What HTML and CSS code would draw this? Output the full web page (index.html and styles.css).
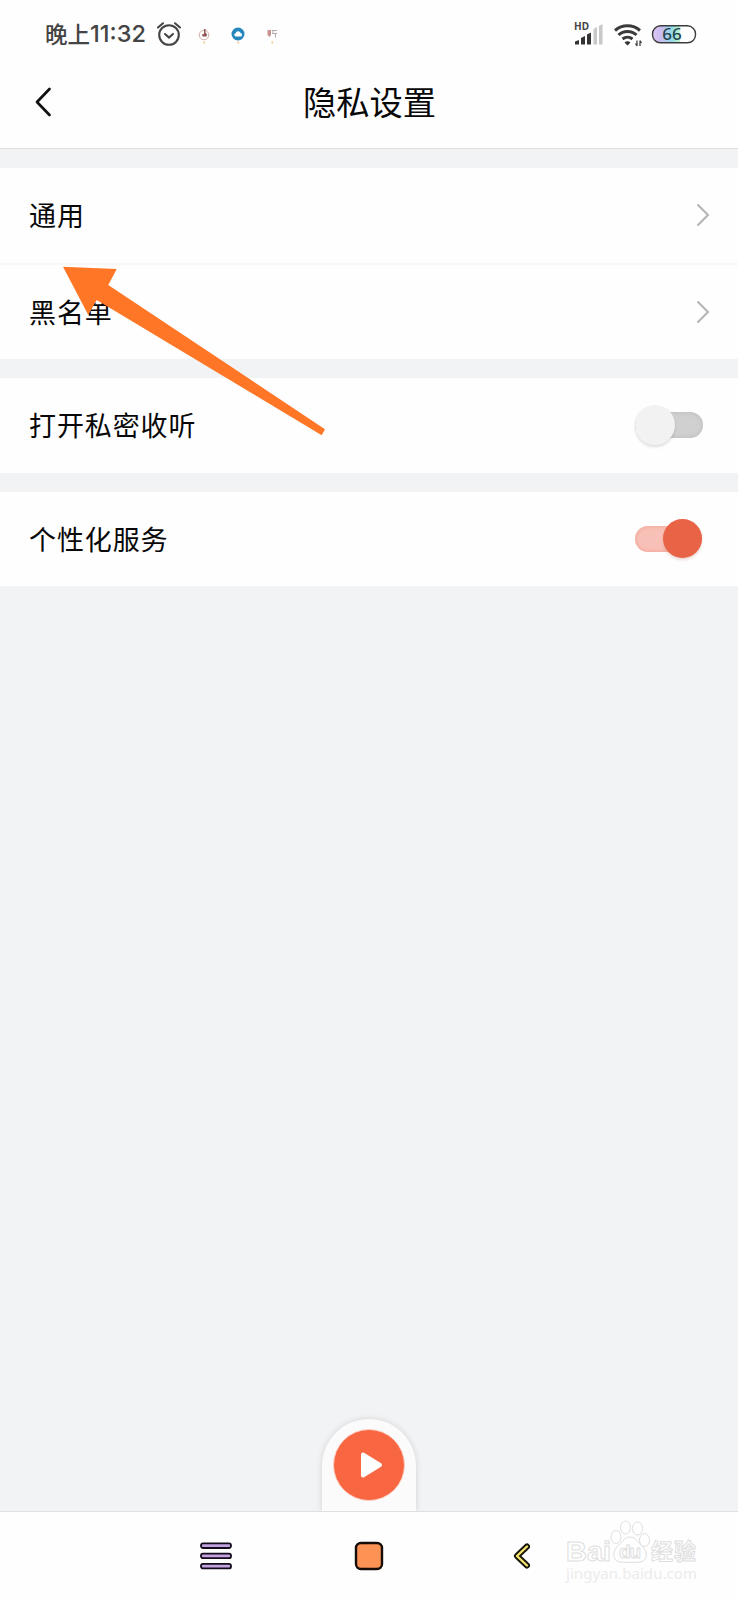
FILE: index.html
```html
<!DOCTYPE html>
<html lang="zh-CN">
<head>
<meta charset="utf-8">
<title>隐私设置</title>
<link rel="stylesheet" href="styles.css">
</head>
<body>
<div class="screen">
  <div class="status">
    <span class="clock">晚上<span class="digits">11:32</span></span>
    <svg class="alarm" width="26" height="26" viewBox="0 0 26 26"><circle cx="13" cy="14" r="9.8"/><path d="M9 13l4 3.600 4-3.600M2 6.500l5-4.200M24 6.500l-5-4.200"/></svg>
    <svg class="mini-icons" width="84" height="22" viewBox="0 0 84 22">
      <circle cx="9" cy="11" r="4.800" fill="none" stroke="#c9a5a0" stroke-width=".9"/>
      <path d="M9 5h1.500v4l1.500 1-.5 2.500H7.500L7 10.500l2-.5z" fill="#8d5350"/>
      <circle cx="43" cy="10" r="6.500" fill="#2587bd"/>
      <path d="M40.500 12.500a1.700 1.700 0 0 1 .1-3.300 2.700 2.700 0 0 1 5-.3 1.900 1.900 0 0 1 .2 3.600z" fill="#fff"/>
      <path d="M72.500 6H76v5l-1.500 2-2-2z" fill="#c99090"/>
      <path d="M77 6.500h5M78 6.500v3M77 9.500h5M80.500 9.500v4" fill="none" stroke="#b5aaaa" stroke-width="1"/>
      <path d="M8.500 17.500H10v2H8.500zM42.500 17.500H44v2h-1.500zM76.500 17.500H78v2h-1.500z" fill="#f5c481"/>
    </svg>
    <svg class="system" width="124" height="32" viewBox="0 -4 124 32">
      <text x="0" y="9" class="hd">HD</text>
      <path class="solid" d="M1 23.500v-3l4-1.500v4.500zM7 23.500V17l4-2v8.500zM13 23.500v-10l4-2v12z"/>
      <path d="M19.500 23.500V8l3.500-2v17.500zM25 23.500V5l3.500-2v20.500z" fill="#c8c8c8"/>
      <g class="waves"><path d="M41 9.500a19 19 0 0 1 25 0M44.500 14a13 13 0 0 1 18 0M48.500 18a8 8 0 0 1 10 0"/></g>
      <path class="solid" d="M50.500 21.500a4.500 4.500 0 0 1 6 0l-3 3z"/>
      <path d="M63 19.500v5.500M66 19.500V25M61.500 22.500L63 25M67.500 22L66 19.500" stroke="#444" stroke-width="1.300" fill="none"/>
      <defs><linearGradient id="charge"><stop offset="0" stop-color="#dcc8f5"/><stop offset=".2" stop-color="#ccbcf2"/><stop offset=".45" stop-color="#93dce8"/><stop offset=".62" stop-color="#baf0ca"/><stop offset=".66" stop-color="#fff"/></linearGradient></defs>
      <rect x="78.500" y="4.800" width="43" height="17" rx="8" fill="url(#charge)" stroke="#3d3d3d" stroke-width="1.400"/>
      <text x="98" y="19.300" class="level">66</text>
    </svg>
  </div>
  <header class="titlebar">
    <svg class="back" width="20" height="32" viewBox="0 0 20 32"><path d="M16.500 3L4 16l12.500 13"/></svg>
    <h1>隐私设置</h1>
  </header>
  <main>
    <section class="group">
      <div class="row"><span>通用</span><svg class="chevron" width="14" height="24" viewBox="0 0 14 24"><path d="M2 2l10 10L2 22"/></svg></div>
      <div class="row"><span>黑名单</span><svg class="chevron" width="14" height="24" viewBox="0 0 14 24"><path d="M2 2l10 10L2 22"/></svg></div>
    </section>
    <section class="group">
      <div class="row"><span>打开私密收听</span><span class="switch off"><span class="knob"></span></span></div>
    </section>
    <section class="group">
      <div class="row"><span>个性化服务</span><span class="switch on"><span class="knob"></span></span></div>
    </section>
  </main>
  <div class="player"><div class="play"><svg width="26" height="30" viewBox="0 0 26 30"><path d="M4 4.500v21L21 15z"/></svg></div></div>
  <nav class="navbar">
    <svg width="34" height="30" viewBox="0 0 34 30"><g fill="#c3a2e2" stroke="#130b18" stroke-width="1.800"><rect x="2" y="2.400" width="30" height="4.600" rx="2"/><rect x="2" y="12.600" width="30" height="4.600" rx="2"/><rect x="2" y="22.800" width="30" height="4.600" rx="2"/></g></svg>
    <svg width="30" height="30" viewBox="0 0 30 30"><rect x="2" y="2" width="26" height="26" rx="5" fill="#fc9253" stroke="#160c08" stroke-width="2.400"/></svg>
    <svg class="nav-back" width="20" height="28" viewBox="0 0 20 28"><g fill="none" stroke-linecap="round" stroke-linejoin="round"><path d="M15 4.500L5 14l10 9.500" stroke="#151408" stroke-width="6"/><path d="M15 4.500L5 14l10 9.500" stroke="#f7e46e" stroke-width="2.400"/></g></svg>
  </nav>
  <svg class="arrow" width="264" height="170" viewBox="0 0 264 170"><path d="M1 .7L54.700 3l-8.400 16L263 163.300l-3.300 6L34.700 34l-8.400 15z"/></svg>
  <svg class="watermark" width="136" height="66" viewBox="0 0 136 66">
    <text x="1" y="41" class="brand" textLength="45" lengthAdjust="spacingAndGlyphs">Bai</text>
    <ellipse cx="51" cy="17" rx="5" ry="6.500"/><ellipse cx="60.500" cy="7.500" rx="5" ry="6.500"/><ellipse cx="72.500" cy="8.500" rx="5" ry="6.500"/><ellipse cx="79.500" cy="20" rx="5" ry="6.500"/>
    <path d="M65 17c6 0 8 6 12 9 6 5 6 15-2 16-5 .5-15 .5-20 0-8-1-8-11-2-16 4-3 6-9 12-9z"/>
    <text x="54" y="38" class="du" textLength="22">du</text>
    <text x="86" y="39" class="cn" textLength="45">经验</text>
    <text x="1" y="59" class="site" textLength="131">jingyan.baidu.com</text>
  </svg>
</div>
</body>
</html>
```
FILE: styles.css
```css
* { box-sizing: border-box; }
body { margin: 0; font-family: "Noto Sans CJK SC", sans-serif; }
svg { display: block; flex: none; }
.screen { position: relative; width: 738px; height: 1600px; overflow: hidden; background: #f2f3f5; display: flex; flex-direction: column; }
.status { height: 68px; background: #fefefe; display: flex; align-items: center; padding: 0 40px 0 45px; color: #444; flex: none; }
.clock { font-size: 22.5px; line-height: 32px; font-weight: 500; width: 102px; white-space: nowrap; display: flex; align-items: center; padding-bottom: 2px; }
.digits { font-family: Inter, sans-serif; font-size: 23.5px; font-weight: 500; padding-top: 2px; }
.alarm { margin-left: 9px; fill: none; stroke: #444; stroke-width: 2.1; stroke-linecap: round; }
.mini-icons { margin: 2px 0 0 13px; }
.system { margin-left: auto; margin-bottom: 2px; }
.hd { font: 700 10px "Noto Sans", sans-serif; fill: #444; }
.solid { fill: #333; }
.waves { fill: none; stroke: #3b3b3b; stroke-width: 3; }
.level { font: 500 17px "Noto Sans", sans-serif; text-anchor: middle; fill: #234451; }
.titlebar { height: 81px; background: #fefefe; border-bottom: 1px solid #dfe0e1; display: flex; align-items: center; padding: 0 33px 12px; flex: none; }
.back { fill: none; stroke: #111; stroke-width: 2.7; stroke-linecap: round; stroke-linejoin: round; }
h1 { margin: 0 19px 2px 0; flex: 1; text-align: center; font-size: 33.3px; line-height: 48px; font-weight: 400; color: #080808; }
main { padding-top: 19px; display: flex; flex-direction: column; gap: 19px; flex: 1; }
.group { background: #fefefe; }
.row { height: 94.5px; padding: 0 28px 0 29px; display: flex; align-items: center; justify-content: space-between; font-size: 27px; line-height: 38px; letter-spacing: .9px; color: #080808; }
.row + .row { border-top: 2px solid #f7f7f8; height: 96.5px; }
.chevron { fill: none; stroke: #b4b4b4; stroke-width: 2; stroke-linecap: round; }
.switch { width: 68px; height: 26px; border-radius: 13px; margin-right: 7px; display: flex; align-items: center; }
.knob { width: 40px; height: 40px; border-radius: 50%; flex: none; }
.off { background: #d0d0d0; box-shadow: inset 0 0 5px #bcbcbc; }
.off .knob { background: #f2f2f2; box-shadow: 0 2px 3px #0002; }
.on { width: 67px; margin-right: 8px; background: #f8c1b8; box-shadow: inset 0 0 5px #f09f92; justify-content: flex-end; }
.on .knob { width: 39px; height: 39px; background: #e96346; box-shadow: 0 2px 3px #a0402833; }
.player { width: 94px; height: 92px; align-self: center; background: #fbfbfb; border-radius: 47px 47px 0 0; box-shadow: 0 0 6px #0002; padding-top: 10px; display: flex; justify-content: center; flex: none; }
.play { width: 72px; height: 72px; border-radius: 50%; background: #f96642; border: 1px solid #fbd0c5; display: flex; align-items: center; justify-content: center; }
.play svg { fill: #fff; stroke: #fff; stroke-width: 4; stroke-linejoin: round; margin-left: 5px; }
.navbar { height: 89px; background: #fefefe; border-top: 1px solid #dfe0e1; display: flex; align-items: center; justify-content: center; gap: 121px; padding-bottom: 1px; z-index: 1; flex: none; }
.nav-back { margin: 0 7px; }
.arrow { position: absolute; left: 62px; top: 266px; fill: #ff7627; }
.watermark { position: absolute; left: 565px; top: 1520px; z-index: 2; fill: #fff; stroke: #dedede; stroke-width: 1; }
.brand { font: 700 28px "Liberation Sans", sans-serif; }
.du { font: 700 19px "Liberation Sans", sans-serif; }
.cn { font: 700 22px "Noto Sans CJK SC", sans-serif; }
.site { font: 400 15px "Noto Sans", sans-serif; fill: #ececec; stroke: none; }
```
